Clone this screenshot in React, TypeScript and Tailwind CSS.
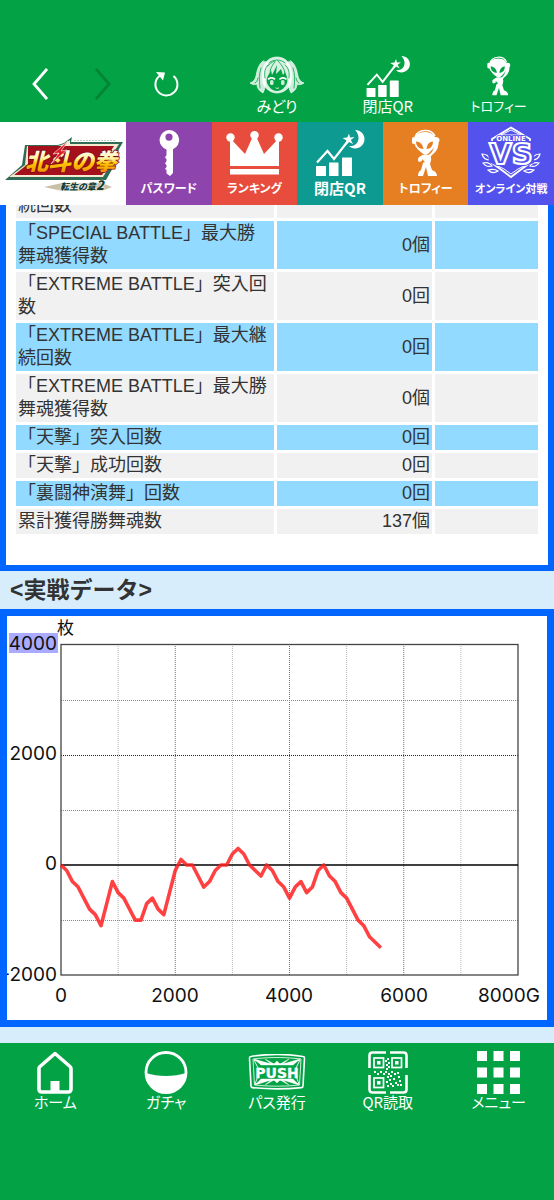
import type { ReactNode } from "react";

type IconProps = { className?: string; bg?: string };

const rows = [
  { name: "「SPECIAL BATTLE」最大継続回数", value: "0回" },
  { name: "「SPECIAL BATTLE」最大勝舞魂獲得数", value: "0個" },
  { name: "「EXTREME BATTLE」突入回数", value: "0回" },
  { name: "「EXTREME BATTLE」最大継続回数", value: "0回" },
  { name: "「EXTREME BATTLE」最大勝舞魂獲得数", value: "0個" },
  { name: "「天撃」突入回数", value: "0回" },
  { name: "「天撃」成功回数", value: "0回" },
  { name: "「裏闘神演舞」回数", value: "0回" },
  { name: "累計獲得勝舞魂数", value: "137個" },
];

// one value for every 100 games
const medals = [
  0, -100, -300, -400, -600, -800, -900, -1100, -700, -300, -500, -600, -800, -1000, -1000, -700, -600, -800, -900,
  -500, -100, 100, 0, 0, -200, -400, -300, -100, 0, 0, 200, 300, 200, 0, -100, -200, 0, -100, -300, -400, -600, -400,
  -300, -500, -400, -100, 0, -200, -300, -500, -600, -800, -1000, -1100, -1300, -1400, -1500,
];

function MidoriIcon() {
  return (
    <svg viewBox="0 0 54 40" className="h-10 w-[54px]" fill="white" stroke="white" strokeLinecap="round" strokeLinejoin="round">
      <path d="M13 5C8 9 7 15 6 20c-1 4-3 6-6 7 3 2 5 2 7 1 0 4 2 7 6 9 2-4 3-8 2-13-1-7 0-12 3-17z" fillOpacity="0.8" strokeWidth="0.6" />
      <path d="M41 5c5 4 6 10 7 15 1 4 3 6 6 7-3 2-5 2-7 1 0 4-2 7-6 9-2-4-3-8-2-13 1-7 0-12-3-17z" fillOpacity="0.8" strokeWidth="0.6" />
      <path d="M13 27c-2-9 0-18 5-23 5-4 13-4 18 0 5 5 7 14 5 23-2 6-8 10-14 10s-12-4-14-10z" fillOpacity="0.85" strokeWidth="0.6" />
      <path d="M17 27c-1-3 0-6 2-9l2-4 1 5 5-10-1 9 5-5 2 6 2-3c2 4 3 8 2 11-2 5-6 8-10 8s-8-3-10-8z" fill="#03a345" stroke="none" />
      <path d="M19 7c4-4 12-4 16 0M18 10c1-2 4-4 7-5M15 22c-1-6 0-10 3-13M39 22c1-6-1-11-4-13M28 5c3 3 6 7 7 12M25 6c-3 3-4 6-5 9M11 12c-2 6-2 12-1 20M43 12c2 6 2 12 1 20M8 22c-1 3-1 4-3 5M46 22c1 3 1 4 3 5" fill="none" stroke="#03a345" strokeWidth="0.8" />
      <path d="M18.500 23c2-1.500 4-1.500 6 0M30 23c2-1.500 4-1.500 6 0" fill="none" strokeWidth="1.600" />
      <rect x="20" y="24" width="3.500" height="5" rx="1.500" fillOpacity="0.8" stroke="none" />
      <rect x="31" y="24" width="3.500" height="5" rx="1.500" fillOpacity="0.8" stroke="none" />
      <path d="M26 32c1 .6 1.500.6 2.500 0" fill="none" strokeWidth="0.900" />
    </svg>
  );
}

function GraphIcon({ className }: IconProps) {
  return (
    <svg viewBox="0 0 50 47" className={className} fill="white">
      <rect x="1" y="37" width="10" height="10" rx="0.5" />
      <rect x="14" y="33.5" width="9.5" height="13.5" rx="0.5" />
      <rect x="27" y="28.5" width="10" height="18.5" rx="0.5" />
      <path d="M2 33.500L12.500 22 19 30 33 12" fill="none" stroke="white" strokeWidth="2.200" />
      <path d="M34 4.500l1 4 4.500-.5-3.700 3 2.300 4-4.100-2-3.500 3.500 1-5-4-2.500 4.800-.5z" />
      <path d="M40 1c6 0 9.500 4.500 9.500 9 0 5.500-4.500 9.500-9.500 9.500-2.500 0-4.500-1-6-2.500 6 .5 9.500-3 9.500-8 0-3.500-1.500-6-3.500-8z" />
    </svg>
  );
}

function AlienIcon({ className, bg }: IconProps) {
  return (
    <svg viewBox="0 0 28 48" className={className} fill="white">
      <path d="M3 8C6 0 19-1 23 7" fill="none" stroke="white" strokeWidth="1.500" />
      <path d="M13 3c7 0 11 4 11 9 0 5-4 9-7 12-2 2-5 2-7 0-4-3-8-7-8-12 0-5 4-9 11-9z" />
      <rect x="0" y="8" width="3.500" height="7" rx="1.700" />
      <path d="M23 8c3 0 4.500 1 4.500 3 0 1.500-1 2-1 3.500 0 5-3 9-7 12l-2 4-2-4c4-2 6-5 6.500-10z" />
      <path d="M4 12.500c4 0 7 3 7.500 7.500C7 20 4 17 4 12.500zM21 12.500c-3.500 0-6 3-6.500 7.500 4 0 6.500-3 6.500-7.500z" fill={bg} />
      <path d="M9 27c2-2 7-2 9 0 2 2 1 5 0 8l2 6c3 1 5 3 5 6h-9l-2-9-3 9H6c0-3 1-5 3-6l2-7-1-2-3 1c-2-2-1-5 2-6z" />
      <path d="M10 30l3 3-3 1z" fill={bg} />
    </svg>
  );
}

function KeyIcon() {
  return (
    <svg viewBox="0 0 22 46" className="h-[46px] w-[22px]">
      <path
        fillRule="evenodd"
        fill="white"
        d="M11 0a10 10 0 0 1 4 19.200V43l-3 3-3.500-2.500V40l-1.500-1 1.500-2v-2l-1.500-1.500L8.500 31v-2L7 27.500 8.500 25v-5.500A10 10 0 0 1 11 0zm0 3.500a3.600 3.600 0 1 0 0 7.200 3.600 3.600 0 0 0 0-7.200z"
      />
    </svg>
  );
}

function CrownIcon() {
  return (
    <svg viewBox="0 0 57 44" className="h-11 w-[57px]" fill="white">
      <circle cx="4.500" cy="6.500" r="4.200" />
      <circle cx="28.500" cy="4.200" r="4.200" />
      <circle cx="52.500" cy="6.500" r="4.200" />
      <path d="M4 7l15 16 8-18h3l8 18L53 7v28H4z" />
      <rect x="4" y="38" width="49" height="5.500" />
    </svg>
  );
}

function VersusIcon() {
  return (
    <svg viewBox="0 0 60 53" className="h-[53px] w-[60px]" fill="none" stroke="white">
      <path d="M30 1.500L49 13v24L38 45l-8 6-8-6-11-8V13z" strokeWidth="1.800" />
      <path d="M30 4l10 5H20zM15 39l8 4 7 5 7-5 8-4" strokeWidth="1" />
      <path d="M9 34c-4 0-7-2-8-6 4 0 7 2 8 6zM11 40c-4 1-7 0-9-3 4-1 7 0 9 3zM17 45c-3 2-7 2-10-1 4-1 7-1 10 1zM51 34c4 0 7-2 8-6-4 0-7 2-8 6zM49 40c4 1 7 0 9-3-4-1-7 0-9 3zM43 45c3 2 7 2 10-1-4-1-7-1-10 1z" strokeWidth="1.200" />
      <path d="M6 15h48l-1 22-9 3H16L8 36z" fill="#5352ed" stroke="none" />
      <text x="30" y="15" textAnchor="middle" fill="white" stroke="#5352ed" strokeWidth="1.500" style={{ paintOrder: "stroke" }} className="font-['DejaVu_Sans'] text-[7px] font-bold">
        ONLINE
      </text>
      <text x="30" y="38" textAnchor="middle" fill="#5352ed" strokeWidth="2.200" className="font-['DejaVu_Sans'] text-[29px] font-bold">
        VS
      </text>
    </svg>
  );
}

function HomeIcon() {
  return (
    <svg viewBox="0 0 36 43" className="h-[43px] w-9" fill="none">
      <path d="M18 2.500L3 15.500c-.7.600-1 1.300-1 2.200V38c0 2 1 3 3 3h26c2 0 3-1 3-3V17.700c0-.9-.3-1.600-1-2.200z" stroke="white" strokeWidth="3.600" strokeLinejoin="round" />
      <rect x="13.500" y="30" width="9" height="10" fill="white" />
    </svg>
  );
}

function GachaIcon() {
  return (
    <svg viewBox="0 0 44 43" className="h-[43px] w-11">
      <circle cx="22" cy="21.500" r="20" fill="none" stroke="white" strokeWidth="2.800" />
      <path d="M2 22c12 4 28 4 40 0a20 20 0 0 1-40 0z" fill="white" />
    </svg>
  );
}

function PushIcon() {
  return (
    <svg viewBox="0 0 58 36" className="h-9 w-[58px]" fill="none" stroke="white">
      <path d="M3 2.500C20-.3 38-.3 55 2.500c1 0 1.500.7 1.500 1.500l-1.500 28c0 1-.5 1.500-1.500 1.600-17 1.800-32 1.800-49 0-1 0-1.500-.6-1.500-1.600L1.500 4c0-.8.500-1.500 1.500-1.500z" strokeWidth="1.600" />
      <path d="M5 5c16-2 32-2 48 0l-1.500 26c-15 1.600-30 1.600-45 0z" strokeWidth="0.800" />
      <path d="M6 6l14 4h18l14-4-4 8v8l3 8-13-4H20L7 30l3-8v-8z" strokeWidth="0.900" />
      <path d="M6 5l17 5-6-5 9 5 3-3 3 3 9-5-6 5 17-5-7 6H13zM7 31l16-5-6 5 9-5 3 3 3-3 9 5-6-5 16 5-6-6H13z" fill="white" strokeWidth="0.400" />
      <text x="29" y="23.500" textAnchor="middle" fill="white" strokeWidth="0.300" className="font-['DejaVu_Sans'] text-[14px] font-bold">
        PUSH
      </text>
    </svg>
  );
}

function QrIcon() {
  const dots = [
    [19, 7], [17, 9], [20, 11], [18, 13], [20, 15], [18, 17], [6, 20], [9, 22], [12, 20], [15, 22], [17, 20], [20, 22], [23, 20],
    [19, 25], [22, 24], [26, 22], [29, 21], [30, 25], [25, 27], [21, 28], [18, 30], [22, 32], [27, 31], [31, 29], [29, 33],
    [24, 34], [19, 34], [32, 33],
  ];
  return (
    <svg viewBox="0 0 40 43" className="h-[43px] w-10" fill="none" stroke="white">
      <path d="M1.500 17V4.500c0-2 1-3 3-3H18M22 1.500h13.500c2 0 3 1 3 3V17M38.500 24v14.500c0 2-1 3-3 3H22M18 41.500H4.500c-2 0-3-1-3-3V24" strokeWidth="2.600" />
      <g strokeWidth="1.700">
        <rect x="6" y="7" width="9.500" height="9.500" />
        <rect x="24" y="7" width="9.500" height="9.500" />
        <rect x="6" y="27" width="9.500" height="9.500" />
      </g>
      <g fill="white" stroke="none">
        <rect x="9" y="10" width="3.500" height="3.500" />
        <rect x="27" y="10" width="3.500" height="3.500" />
        <rect x="9" y="30" width="3.500" height="3.500" />
        {dots.map(([x, y]) => (
          <rect key={`${x}-${y}`} x={x} y={y} width="2" height="2" />
        ))}
      </g>
    </svg>
  );
}

function MenuIcon() {
  return (
    <svg viewBox="0 0 43 43" className="size-[43px]" fill="white">
      {[0, 16.500, 33].map((y) => [0, 16.500, 33].map((x) => <rect key={`${x}-${y}`} x={x} y={y} width="10" height="10" />))}
    </svg>
  );
}

function TitleLogo() {
  return (
    <svg viewBox="0 0 126 82" className="w-full">
      <defs>
        <linearGradient id="gold" x1="0" y1="0" x2="0" y2="1">
          <stop offset="0.200" stopColor="#ffffff" />
          <stop offset="0.450" stopColor="#fff3a0" />
          <stop offset="0.600" stopColor="#ffc400" />
          <stop offset="0.900" stopColor="#f08a12" />
        </linearGradient>
      </defs>
      <path d="M64 20l8-6-1 5h52l-8 14 4 1-13 23H5l17-15 3-20h33z" fill="#2f6b55" />
      <path d="M64 21l6-4v4h49l-8 12 5 1-13 20H9l16-12 2-19h31z" fill="#f5ead0" />
      <path d="M28 23h86l-7 11 6 1-11 17H14l14-11z" fill="#a5101c" />
      <path d="M74 17.500h42" stroke="#b5cfc0" strokeDasharray="2 1" />
      <text x="25" y="47" fill="url(#gold)" stroke="#7d0a12" strokeWidth="1.500" style={{ paintOrder: "stroke" }} className="font-['Noto_Sans_CJK_JP'] text-[23px] font-black italic">
        北斗の拳
      </text>
      <path d="M68 18L53 31l6-1-8 11 16-14-6 1z" fill="#e01b24" stroke="#ffffff" strokeWidth="0.600" />
      <path d="M44 64l18-4h40l10 4-10 4H62z" fill="#c9c0a8" />
      <text x="60" y="67" fill="#163f32" stroke="#ffffff" strokeWidth="1" style={{ paintOrder: "stroke" }} className="font-['Noto_Sans_CJK_JP'] text-[9px] font-black italic">
        転生の章<tspan className="text-[13px]">2</tspan>
      </text>
    </svg>
  );
}

function NavButton({ icon, label, size = "text-[15px]" }: { icon: ReactNode; label: string; size?: string }) {
  return (
    <button className={`flex flex-col items-center text-white ${size}`}>
      <span className="flex h-11 items-center justify-center">{icon}</span>
      <span className="leading-4">{label}</span>
    </button>
  );
}

function TabButton({ icon, label, color, size = "text-[12px]" }: { icon: ReactNode; label: string; color: string; size?: string }) {
  return (
    <button className={`flex min-w-0 flex-1 flex-col items-center font-bold whitespace-nowrap text-white ${size} ${color}`}>
      <span className="flex h-[57px] items-center justify-center pt-1">{icon}</span>
      <span className="leading-[18px]">{label}</span>
    </button>
  );
}

function MedalChart() {
  const px = (games: number) => 54 + (games / 8000) * 457;
  const py = (value: number) => 249 - (value / 6000) * 331;
  const line = medals.map((value, i) => `${px(i * 100)},${py(value)}`).join(" ");

  return (
    <svg viewBox="0 0 540 404" className="block w-full bg-white font-[Inter,'Noto_Sans_CJK_JP',sans-serif] text-[19px]">
      <rect x="2" y="17" width="49" height="20" fill="#aaaaff" />
      {[1000, 2000, 3000, 4000, 5000, 6000, 7000].map((x) => (
        <path key={x} d={`M${px(x)} 28V359`} stroke={x % 2000 ? "#b5b5b5" : "#707070"} strokeDasharray="1 1" />
      ))}
      {[3000, 2000, 1000, -1000].map((y) => (
        <path key={y} d={`M54 ${Math.round(py(y)) + 0.5}H511`} stroke={y % 2000 ? "#888888" : "#222222"} strokeDasharray="1 1" />
      ))}
      <rect x="54" y="28.500" width="457" height="330.500" fill="none" stroke="#444444" strokeWidth="1.300" />
      <path d="M54 249H511" stroke="black" strokeWidth="1.500" />
      <polyline points={line} fill="none" stroke="#ff2020" strokeOpacity="0.850" strokeWidth="3.600" strokeLinejoin="round" />
      <g fill="#111111">
        <text x="50" y="18" className="text-[17px]">枚</text>
        <g textAnchor="end">
          <text x="50" y="34">4000</text>
          <text x="50" y="144">2000</text>
          <text x="50" y="254">0</text>
          <text x="50" y="365">-2000</text>
          <text x="533" y="386">8000G</text>
        </g>
        <g textAnchor="middle">
          <text x="54" y="386">0</text>
          <text x="168" y="386">2000</text>
          <text x="282" y="386">4000</text>
          <text x="397" y="386">6000</text>
        </g>
      </g>
    </svg>
  );
}

export default function App() {
  return (
    <div className="flex h-screen flex-col overflow-hidden bg-[#d8edfb] font-['Liberation_Sans','Noto_Sans_CJK_JP',sans-serif] text-[#333]">
      <header className="grid shrink-0 grid-cols-5 bg-[#03a345] pt-[54px] pb-2 font-['Noto_Sans_CJK_JP',sans-serif] [font-feature-settings:'palt']">
        <div className="flex items-center justify-between pl-8">
          <button aria-label="戻る">
            <svg viewBox="0 0 16 32" className="h-8 w-4" fill="none" stroke="white" strokeWidth="2.800">
              <path d="M15 1L2 16l13 15" />
            </svg>
          </button>
          <button aria-label="進む">
            <svg viewBox="0 0 16 32" className="h-8 w-4" fill="none" stroke="#028436" strokeWidth="2.800">
              <path d="M1 1l13 15L1 31" />
            </svg>
          </button>
        </div>
        <button aria-label="更新" className="flex items-center justify-center">
          <svg viewBox="0 0 26 26" className="size-[26px]" fill="none" stroke="white" strokeWidth="2">
            <path d="M20.500 5A11 11 0 1 1 7 4.500" />
            <path d="M3 1l9 .5-2 8z" fill="white" stroke="none" />
          </svg>
        </button>
        <NavButton icon={<MidoriIcon />} label="みどり" />
        <NavButton icon={<GraphIcon className="h-[42px] w-[46px]" />} label="閉店QR" />
        <NavButton icon={<AlienIcon className="h-10 w-6" bg="#03a345" />} label="トロフィー" size="text-[13px]" />
      </header>

      <nav className="flex h-[83px] shrink-0 font-['Noto_Sans_CJK_JP',sans-serif] [font-feature-settings:'palt']">
        <button aria-label="北斗の拳 転生の章2" className="w-[126px] bg-white">
          <TitleLogo />
        </button>
        <TabButton icon={<KeyIcon />} label="パスワード" color="bg-[#8e44ad]" />
        <TabButton icon={<CrownIcon />} label="ランキング" color="bg-[#e74c3c]" />
        <TabButton icon={<GraphIcon className="h-[47px] w-[50px]" />} label="閉店QR" color="bg-[#0d9a90]" size="text-[15px]" />
        <TabButton icon={<AlienIcon className="h-12 w-7" bg="#e67e22" />} label="トロフィー" color="bg-[#e67e22]" />
        <TabButton icon={<VersusIcon />} label="オンライン対戦" color="bg-[#5352ed]" size="text-[11px]" />
      </nav>

      <main className="min-h-0 flex-1 overflow-hidden">
        {/* the list is scrolled part of the way through its first row */}
        <section className="-mt-[38px] border-6 border-t-0 border-[#0066ff] bg-white px-[7px] pb-7">
          <table className="w-full table-fixed border-separate border-spacing-[3px] text-[18px] leading-[23px]">
            <colgroup>
              <col />
              <col className="w-[155px]" />
              <col className="w-[103px]" />
            </colgroup>
            <tbody>
              {rows.map((row) => (
                <tr key={row.name} className="bg-[#f1f1f1] even:bg-[#92daff]">
                  <th className="px-0.5 py-px text-left font-normal">{row.name}</th>
                  <td className="px-0.5 py-px text-right">{row.value}</td>
                  <td />
                </tr>
              ))}
            </tbody>
          </table>
        </section>
        <h2 className="px-2.5 text-[23px] leading-[38px] font-bold">&lt;実戦データ&gt;</h2>
        <section className="border-7 border-[#0066ff] bg-white">
          <MedalChart />
        </section>
      </main>

      <footer className="grid shrink-0 grid-cols-5 bg-[#03a345] pt-[7px] pb-[90px] font-['Noto_Sans_CJK_JP',sans-serif] [font-feature-settings:'palt']">
        <NavButton icon={<HomeIcon />} label="ホーム" />
        <NavButton icon={<GachaIcon />} label="ガチャ" />
        <NavButton icon={<PushIcon />} label="パス発行" />
        <NavButton icon={<QrIcon />} label="QR読取" />
        <NavButton icon={<MenuIcon />} label="メニュー" />
      </footer>
    </div>
  );
}
